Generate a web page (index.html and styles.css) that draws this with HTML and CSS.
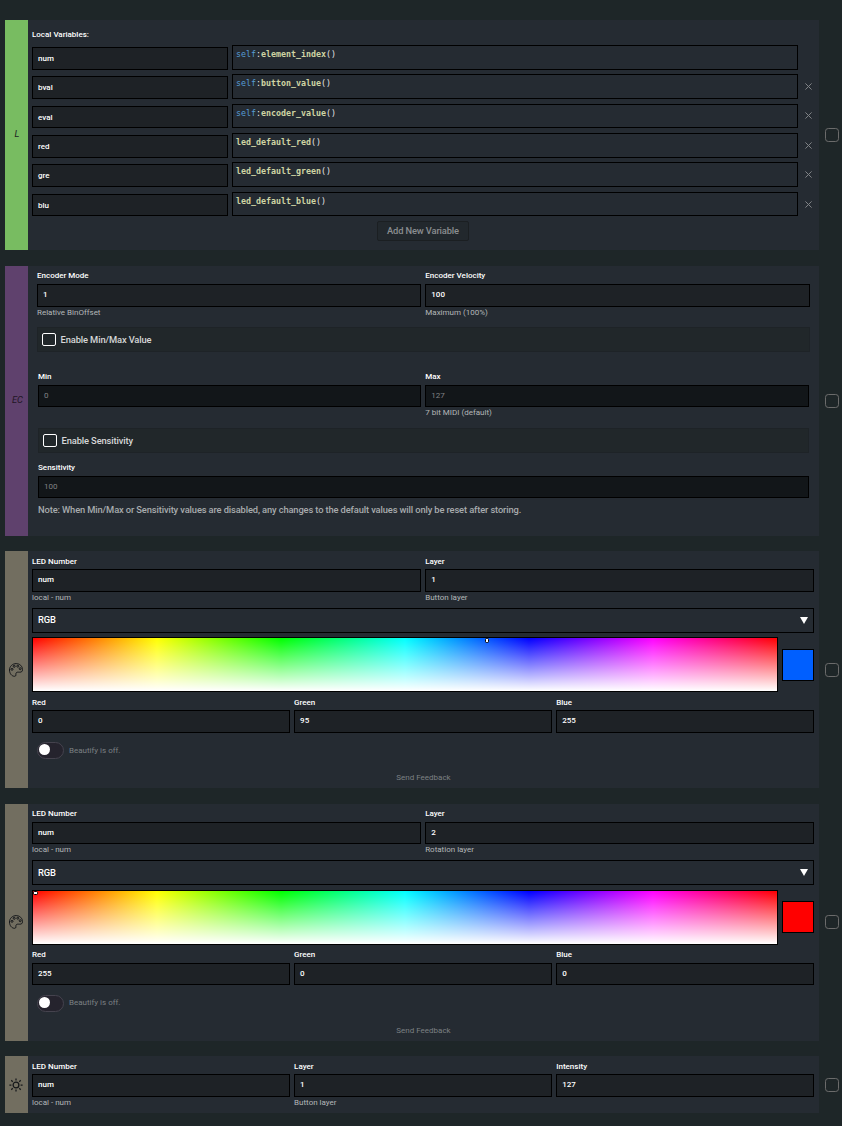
FILE: index.html
```html
<!DOCTYPE html>
<html lang="en">
<head>
<meta charset="utf-8">
<title>Action blocks</title>
<link rel="stylesheet" href="styles.css">
</head>
<body>
<svg width="0" height="0" class="defs">
  <symbol id="palette" viewBox="0 0 14 14">
    <path d="M7.200.6C3.400.6.5 3.400.5 7c0 3.600 2.400 6.300 5 6.300 2 0 1.100-1.700 1.500-3 .5-1.500 1.900-1.100 3.600-1.100 1.900 0 2.900-.7 2.900-2.500C13.500 3.100 10.700.6 7.200.6Z"/>
    <circle cx="3" cy="6.300" r="1"/><circle cx="5.200" cy="3.300" r="1"/><circle cx="8.800" cy="3.200" r="1"/><circle cx="11.200" cy="5.700" r="1"/>
  </symbol>
  <symbol id="sun" viewBox="0 0 14 14">
    <circle cx="7" cy="7" r="2.900"/>
    <path d="M7 .4v2M7 11.600v2M.4 7h2M11.600 7h2M2.300 2.300l1.400 1.400M10.300 10.300l1.400 1.400M2.300 11.700l1.400-1.400M10.300 3.700l1.400-1.400"/>
  </symbol>
  <symbol id="close" viewBox="0 0 7 7"><path d="M.4.4l6.200 6.200M6.600.4L.4 6.600"/></symbol>
</svg>
<main class="blocks">
  <section class="block locals">
    <div class="tag green">L</div>
    <div class="panel">
      <div class="label">Local Variables:</div>
      <div class="vars">
        <div class="var"><div class="field">num</div><div class="code"><i>self</i>:<b>element_index</b>()</div></div>
        <div class="var"><div class="field">bval</div><div class="code"><i>self</i>:<b>button_value</b>()</div><svg class="close"><use href="#close"/></svg></div>
        <div class="var"><div class="field">eval</div><div class="code"><i>self</i>:<b>encoder_value</b>()</div><svg class="close"><use href="#close"/></svg></div>
        <div class="var"><div class="field">red</div><div class="code"><b>led_default_red</b>()</div><svg class="close"><use href="#close"/></svg></div>
        <div class="var"><div class="field">gre</div><div class="code"><b>led_default_green</b>()</div><svg class="close"><use href="#close"/></svg></div>
        <div class="var"><div class="field">blu</div><div class="code"><b>led_default_blue</b>()</div><svg class="close"><use href="#close"/></svg></div>
      </div>
      <div class="add">Add New Variable</div>
    </div>
    <div class="pick"></div>
  </section>

  <section class="block encoder">
    <div class="tag purple">EC</div>
    <div class="panel">
      <div class="cols two">
        <div><div class="label">Encoder Mode</div><div class="field">1</div><div class="hint">Relative BinOffset</div></div>
        <div><div class="label">Encoder Velocity</div><div class="field">100</div><div class="hint">Maximum (100%)</div></div>
      </div>
      <div class="option"><span class="box"></span><span class="text">Enable Min/Max Value</span></div>
      <div class="inner">
        <div class="cols two">
          <div><div class="label">Min</div><div class="field off">0</div></div>
          <div><div class="label">Max</div><div class="field off">127</div><div class="hint">7 bit MIDI (default)</div></div>
        </div>
        <div class="option"><span class="box"></span><span class="text">Enable Sensitivity</span></div>
        <div class="label sens">Sensitivity</div>
        <div class="field off">100</div>
        <div class="note">Note: When Min/Max or Sensitivity values are disabled, any changes to the default values will only be reset after storing.</div>
      </div>
    </div>
    <div class="pick"></div>
  </section>

  <section class="block color first">
    <div class="tag stone"><svg class="icon"><use href="#palette"/></svg></div>
    <div class="panel">
      <div class="cols two">
        <div><div class="label">LED Number</div><div class="field">num</div><div class="hint">local - num</div></div>
        <div><div class="label">Layer</div><div class="field">1</div><div class="hint">Button layer</div></div>
      </div>
      <div class="select">RGB<svg class="caret" viewBox="0 0 8 7"><path d="M0 0h8L4 7z"/></svg></div>
      <div class="picker"><div class="spectrum"><span class="marker blue-at"></span></div><div class="swatch blue"></div></div>
      <div class="cols three">
        <div><div class="label">Red</div><div class="field">0</div></div>
        <div><div class="label">Green</div><div class="field">95</div></div>
        <div><div class="label">Blue</div><div class="field">255</div></div>
      </div>
      <div class="beautify"><span class="toggle"></span><span class="text">Beautify is off.</span></div>
      <div class="feedback">Send Feedback</div>
    </div>
    <div class="pick"></div>
  </section>

  <section class="block color">
    <div class="tag stone"><svg class="icon"><use href="#palette"/></svg></div>
    <div class="panel">
      <div class="cols two">
        <div><div class="label">LED Number</div><div class="field">num</div><div class="hint">local - num</div></div>
        <div><div class="label">Layer</div><div class="field">2</div><div class="hint">Rotation layer</div></div>
      </div>
      <div class="select">RGB<svg class="caret" viewBox="0 0 8 7"><path d="M0 0h8L4 7z"/></svg></div>
      <div class="picker"><div class="spectrum"><span class="marker red-at"></span></div><div class="swatch red"></div></div>
      <div class="cols three">
        <div><div class="label">Red</div><div class="field">255</div></div>
        <div><div class="label">Green</div><div class="field">0</div></div>
        <div><div class="label">Blue</div><div class="field">0</div></div>
      </div>
      <div class="beautify"><span class="toggle"></span><span class="text">Beautify is off.</span></div>
      <div class="feedback">Send Feedback</div>
    </div>
    <div class="pick"></div>
  </section>

  <section class="block intensity">
    <div class="tag stone"><svg class="icon sun"><use href="#sun"/></svg></div>
    <div class="panel">
      <div class="cols three">
        <div><div class="label">LED Number</div><div class="field">num</div><div class="hint">local - num</div></div>
        <div><div class="label">Layer</div><div class="field">1</div><div class="hint">Button layer</div></div>
        <div><div class="label">Intensity</div><div class="field">127</div></div>
      </div>
    </div>
    <div class="pick"></div>
  </section>
</main>
</body>
</html>
```
FILE: styles.css
```css
* { box-sizing: border-box; }
body {
  margin: 0;
  background: #1e2628;
  color: #fff;
  font: 500 8px/12px Roboto, "Liberation Sans", sans-serif;
}
.defs { position: absolute; }
.blocks { height: 1126px; padding: 20px 3px 0 5px; overflow: hidden; }
.block { display: flex; align-items: stretch; }
.tag {
  width: 23px;
  flex: none;
  display: flex;
  align-items: center;
  justify-content: center;
  padding: 0 0 2px 1px;
  color: #1c2422;
  font-size: 9.33px;
  font-style: italic;
  font-weight: 400;
}
.green { background: #78bc61; }
.purple { padding-left: 2px; background: #5f416d; color: #1f1626; }
.stone { padding: 0 1px 0 0; background: #726e60; }
.icon { width: 14px; height: 14px; fill: none; stroke: #15171a; stroke-width: 1; }
.sun { stroke-width: 1.25; }
.panel { width: 791px; padding: 0 5px 0 4px; background: #252b32; }
.pick {
  align-self: center;
  width: 14px;
  height: 14px;
  margin-left: 6px;
  border: 1px solid #6b6b6b;
  border-radius: 3.3px;
}
.label { height: 12px; padding-top: 0.67px; }
.field {
  height: 22.67px;
  padding-left: 5px;
  border: 1px solid #000;
  background: #1e2226;
  line-height: 20.8px;
}
.off { background: #121619; color: #808284; font-weight: 400; }
.hint { height: 12px; color: #b4b7b9; font-weight: 400; }
.cols { display: grid; column-gap: 4.3px; }
.two { grid-template-columns: 1fr 1fr; }
.three { grid-template-columns: 1fr 1fr 1fr; }

/* Local variables */
.locals { height: 230px; }
.locals .label { margin-top: 8px; }
.vars { display: grid; grid-auto-rows: 24.7px; row-gap: 4.68px; margin-top: 4.9px; }
.var { display: grid; grid-template-columns: 196px 566px 7px; column-gap: 4px; }
.var .field { align-self: end; height: 22.6px; line-height: 21px; }
.code {
  padding-left: 3px;
  border: 1px solid #000;
  color: #e4e4e4;
  font: 8.3px/17.3px "DejaVu Sans Mono", monospace;
}
.code i { color: #569cd6; font-style: normal; }
.code b { color: #d0d5a4; }
.close { width: 7px; height: 7px; margin-left: 3px; align-self: center; fill: none; stroke: #808386; }
.add {
  width: 92px;
  height: 20px;
  margin: 4.5px auto 0 345px;
  border: 1px solid #1b1f22;
  border-radius: 2px;
  background: #22282d;
  color: #8b8e91;
  font-size: 9.33px;
  letter-spacing: -0.13px;
  line-height: 18px;
  text-align: center;
}

/* Encoder */
.encoder { height: 270px; margin-top: 16px; }
.encoder .panel { padding: 3px 9px 0; }
.encoder .cols { column-gap: 4.67px; grid-template-columns: 383.67px 1fr; }
.encoder .inner .cols { grid-template-columns: 382.67px 1fr; }
.encoder .label { height: 15px; }
.option {
  display: flex;
  align-items: center;
  height: 25px;
  padding-left: 4px;
  border: 1px solid #1e2327;
  background: #21272a;
  color: #d6d7d8;
  font-size: 9.33px;
  letter-spacing: -0.13px;
}
.option .text { padding-top: 1.4px; }
.encoder .panel > .option { margin-top: 8.33px; }
.box { width: 14px; height: 13px; margin-right: 4.6px; border: 1px solid #fff; border-radius: 2px; }
.inner { padding: 18px 1px 0; }
.inner .field { height: 22px; }
.inner .off { line-height: 20.5px; }
.inner .option { margin-top: 9px; }
.encoder .sens { margin-top: 8px; }
.note { margin-top: 6px; color: #a8abae; font-size: 9.33px; letter-spacing: -0.13px; }

/* LED colour */
.color { height: 237px; margin-top: 15.67px; }
.color.first { margin-top: 15px; }
.color .panel { padding-top: 4px; }
.color .label { height: 14px; }
.select {
  display: flex;
  align-items: center;
  justify-content: space-between;
  height: 24.9px;
  margin-top: 4.13px;
  padding: 0 5px;
  border: 1px solid #000;
  font-size: 9.33px;
  letter-spacing: -0.13px;
}
.caret { width: 8px; height: 7px; fill: #fff; }
.picker { display: flex; align-items: center; gap: 4px; height: 55px; margin-top: 4.3px; }
.spectrum {
  position: relative;
  width: 746px;
  height: 55px;
  border: 1px solid #000;
  background:
    linear-gradient(to bottom, transparent, #fff),
    linear-gradient(to right, red, yellow, lime, cyan, blue, magenta, red);
}
.marker { position: absolute; border: 1px solid #000; border-radius: 1.5px; background: #fff; }
.blue-at { left: 452px; top: 0; width: 4px; height: 5px; }
.red-at { left: 0; top: 0; width: 5px; height: 4px; }
.swatch { width: 32px; height: 32px; margin-top: 0.6px; border: 1px solid #000; }
.blue { background: #005fff; }
.red { background: #f00; }
.picker + .cols { margin-top: 4px; }
.beautify {
  display: flex;
  align-items: center;
  gap: 5px;
  height: 17px;
  margin: 9.33px 0 0 5px;
  color: #7c8083;
  font-weight: 400;
}
.beautify .text { padding-top: 0.6px; }
.toggle { width: 27px; height: 17px; padding: 1px; border: 1px solid #45434e; border-radius: 9px; background: #25232d; }
.toggle::before { content: ""; display: block; width: 11px; height: 11px; border-radius: 50%; background: #fff; }
.feedback { margin-top: 13px; padding-left: 1px; color: #7c8083; font-weight: 400; text-align: center; }

/* LED intensity */
.intensity { height: 56.67px; margin-top: 15.67px; }
.intensity .panel { padding-top: 4px; }
.intensity .label { height: 14px; }
```
